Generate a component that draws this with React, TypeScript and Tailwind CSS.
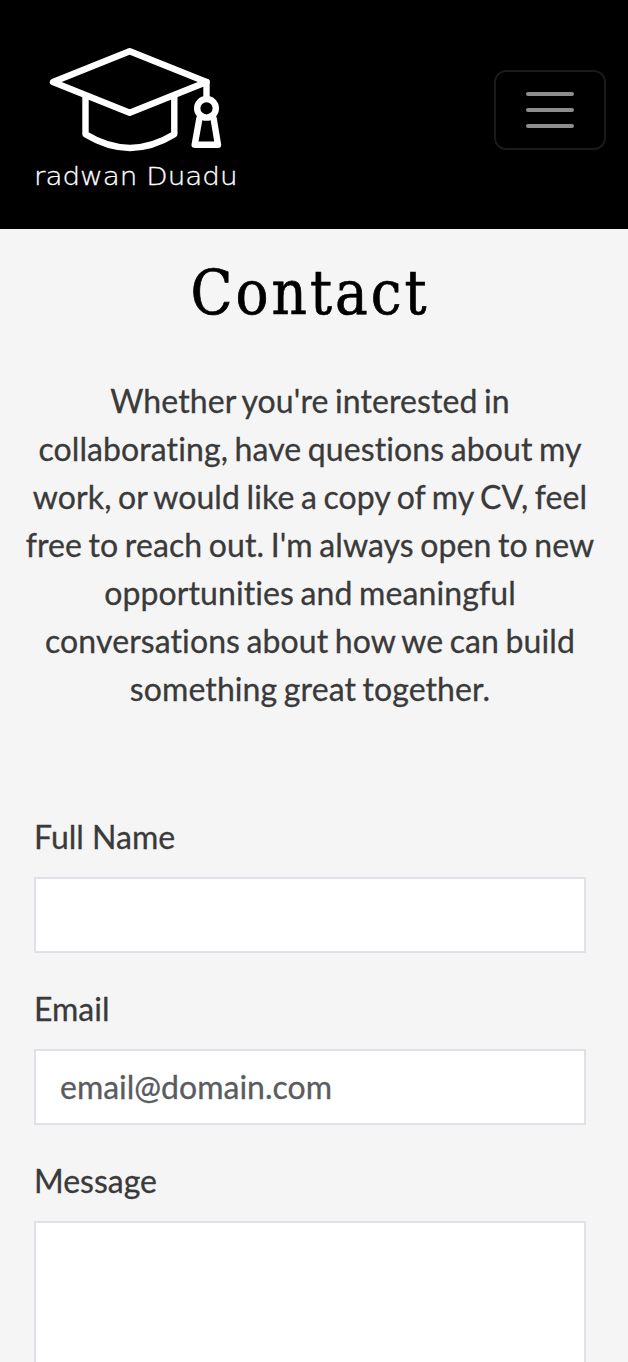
function CapLogo() {
  return (
    <svg width="220" height="160" viewBox="26 40 220 160" fill="none" stroke="#fff" strokeWidth="6.4" strokeLinejoin="round" strokeLinecap="round" aria-label="radwan Duadu">
      <path d="M53 82L129.7 51.3L206.5 82L129.7 112.8Z" />
      <path d="M85.5 96V134.3Q130 161.5 174.3 134.3V96" />
      <path d="M206.5 82V98" />
      <circle cx="206.5" cy="108.3" r="9.3" />
      <path d="M199.5 118L194.7 144.7H218L213.5 118" />
      <text x="34" y="185.3" fill="#fff" stroke="#fff" strokeWidth="0.3" textLength="203.5" lengthAdjust="spacingAndGlyphs" className="font-['DejaVu_Sans',sans-serif] text-[24.5px] font-extralight">
        radwan Duadu
      </text>
    </svg>
  );
}

function Field({ label, placeholder, type = "text" }: { label: string; placeholder?: string; type?: string }) {
  return (
    <label className="mb-8 block">
      <span className="mb-4 block">{label}</span>
      <input
        type={type}
        placeholder={placeholder}
        className="block h-[76px] w-full border-2 border-[#dee2e6] bg-white px-6 pb-0.5 outline-none placeholder:text-[#595c5f]"
      />
    </label>
  );
}

export default function App() {
  return (
    <div className="h-[1362px] w-full overflow-hidden bg-[#f5f5f5] font-['Lato',sans-serif] text-[32px] leading-[48px] text-[#3a3a3a] [-webkit-text-stroke-width:0.3px] [font-variant-ligatures:none]">
      <header className="flex h-[229px] items-start justify-between bg-black pr-[22px] pl-[26px]">
        <a href="#" className="mt-10 block">
          <CapLogo />
        </a>
        <button aria-label="Menu" className="mt-[70px] flex h-20 w-28 flex-col items-center justify-center gap-3 rounded-xl border-2 border-[#1a1a1a]">
          <span className="h-1 w-12 rounded-full bg-[#8c8c8c]" />
          <span className="h-1 w-12 rounded-full bg-[#8c8c8c]" />
          <span className="h-1 w-12 rounded-full bg-[#8c8c8c]" />
        </button>
      </header>
      <main className="w-[620px]">
        <h1 className="flex h-[148px] justify-center pt-[26px] font-['DejaVu_Serif_Condensed','DejaVu_Serif',serif] text-[61px] leading-[76px] tracking-[3px] text-black [-webkit-text-stroke-width:0.7px]">
          Contact
        </h1>
        <p className="mx-6 text-center tracking-[0.1px] [word-spacing:-1.8px]">
          Whether you're interested in collaborating, have questions about my work, or would like a copy of my CV, feel free to reach out. I'm always open to new opportunities and meaningful conversations about how we can build something great together.
        </p>
        <form className="mx-[34px] mt-[100px]">
          <Field label="Full Name" />
          <Field label="Email" type="email" placeholder="email@domain.com" />
          <label className="block">
            <span className="mb-4 block">Message</span>
            <textarea className="block h-[220px] w-full resize-none border-2 border-[#dee2e6] bg-white px-6 py-3 outline-none" />
          </label>
        </form>
      </main>
    </div>
  );
}
